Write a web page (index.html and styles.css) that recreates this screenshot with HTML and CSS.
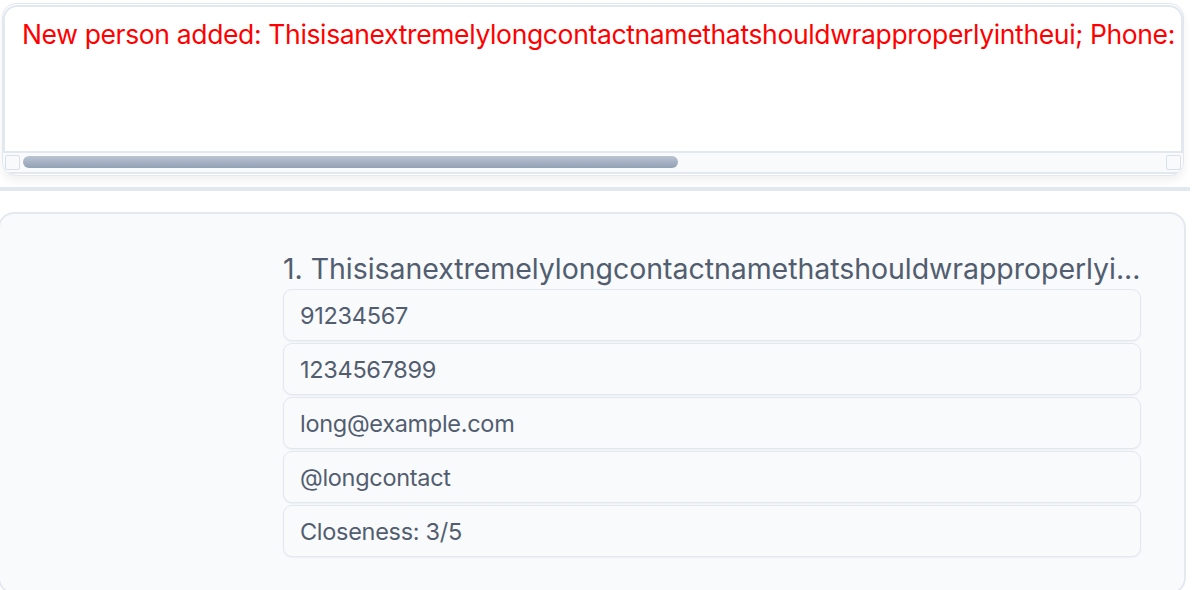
FILE: index.html
```html
<!DOCTYPE html>
<html lang="en">
<head>
<meta charset="utf-8">
<title>Address Book</title>
<link rel="stylesheet" href="styles.css">
</head>
<body>
<div class="app">
  <section class="result">
    <div class="result-view">
      <div class="result-text">New person added: Thisisanextremelylongcontactnamethatshouldwrapproperlyintheui; Phone:</div>
    </div>
    <div class="hbar">
      <span class="sbtn"></span>
      <div class="track"><div class="thumb"></div></div>
      <span class="sbtn"></span>
    </div>
  </section>
  <div class="divider"></div>
  <section class="list">
    <div class="card">
      <div class="name">1. Thisisanextremelylongcontactnamethatshouldwrapproperlyi...</div>
      <div class="field">91234567</div>
      <div class="field">1234567899</div>
      <div class="field">long@example.com</div>
      <div class="field">@longcontact</div>
      <div class="field">Closeness: 3/5</div>
    </div>
  </section>
</div>
</body>
</html>
```
FILE: styles.css
```css
html, body {
  margin: 0;
  padding: 0;
}
body {
  width: 1198px;
  height: 590px;
  overflow: hidden;
  background: #ffffff;
  font-family: Inter, "Noto Sans", sans-serif;
}
.app {
  display: flex;
  flex-direction: column;
  height: 590px;
}
.result {
  box-sizing: border-box;
  margin: 3px 0 0 2px;
  width: 1182px;
  height: 173px;
  border: 1px solid #e3e8ef;
  border-radius: 14px;
  padding: 1px 0 0 0;
  background: #ffffff;
  display: flex;
  flex-direction: column;
  overflow: hidden;
  box-shadow: 0 5px 9px rgba(15, 23, 42, 0.06);
}
.result-view {
  box-sizing: border-box;
  height: 148px;
  border: 2px solid #e2e8f0;
  border-radius: 14px 14px 0 0;
  background: #ffffff;
  padding: 0 0 0 17px;
  overflow: hidden;
  white-space: nowrap;
}
.result-text {
  color: #ff0000;
  font-size: 26.5px;
  letter-spacing: -0.36px;
  line-height: 34px;
  padding-top: 10px;
}
.hbar {
  box-sizing: border-box;
  height: 21px;
  display: flex;
  align-items: center;
  gap: 3px;
  background: #f8fafc;
  border-bottom: 2px solid #e2e8f0;
  padding: 0 2px 0 2px;
}
.sbtn {
  box-sizing: border-box;
  flex: none;
  width: 15px;
  height: 15px;
  border: 1px solid #d9e0e9;
  background: #f8fafc;
  border-radius: 2px;
}
.track {
  flex: 1;
  height: 13px;
}
.thumb {
  width: 655px;
  height: 12px;
  border-radius: 6px;
  background: linear-gradient(#bac4d2, #93a1b5);
}
.divider {
  margin-top: 11px;
  width: 1190px;
  height: 4px;
  background: #e2e8f0;
}
.list {
  box-sizing: border-box;
  flex: 1;
  margin: 21px 12px -4px -2px;
  background: #f8fafc;
  border: 2px solid #e4e9f0;
  border-radius: 16px;
  padding: 37px 43px 0 283px;
}
.card {
  display: flex;
  flex-direction: column;
  gap: 2px;
}
.name {
  color: #525e70;
  font-size: 28.5px;
  letter-spacing: -0.05px;
  line-height: 36px;
  white-space: nowrap;
  overflow: hidden;
}
.field {
  box-sizing: border-box;
  height: 52px;
  display: flex;
  align-items: center;
  padding-left: 16px;
  border: 1.5px solid #e2e8f0;
  border-radius: 9px;
  background: #f9fafc;
  box-shadow: 0 1px 2px rgba(15, 23, 42, 0.05);
  color: #525e70;
  font-size: 23.5px;
  letter-spacing: -0.3px;
}
```
